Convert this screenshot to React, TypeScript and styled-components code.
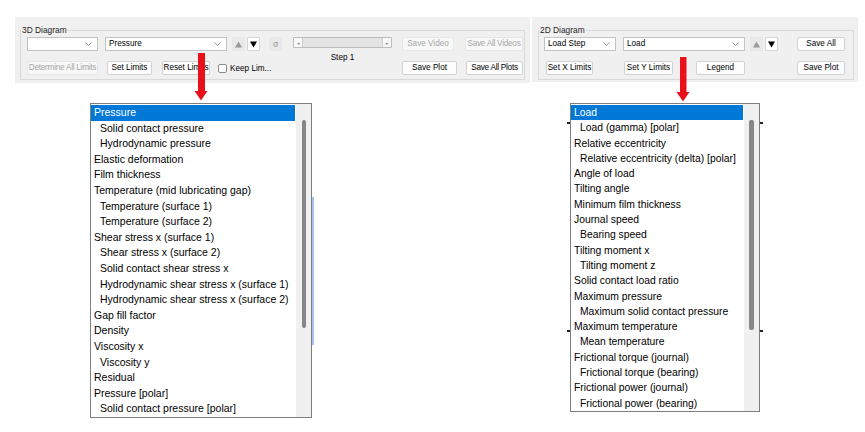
import styled, { createGlobalStyle } from "styled-components";

const GlobalStyle = createGlobalStyle`
  html, body { margin: 0; padding: 0; background: #fff; }
  body { font-family: "Liberation Sans", Arial, sans-serif; color: #000; }
  * { box-sizing: border-box; }
`;

type Entry = [string, number];

const items3D: Entry[] = [
  ["Pressure", 0],
  ["Solid contact pressure", 1],
  ["Hydrodynamic pressure", 1],
  ["Elastic deformation", 0],
  ["Film thickness", 0],
  ["Temperature (mid lubricating gap)", 0],
  ["Temperature (surface 1)", 1],
  ["Temperature (surface 2)", 1],
  ["Shear stress x (surface 1)", 0],
  ["Shear stress x (surface 2)", 1],
  ["Solid contact shear stress x", 1],
  ["Hydrodynamic shear stress x (surface 1)", 1],
  ["Hydrodynamic shear stress x (surface 2)", 1],
  ["Gap fill factor", 0],
  ["Density", 0],
  ["Viscosity x", 0],
  ["Viscosity y", 1],
  ["Residual", 0],
  ["Pressure [polar]", 0],
  ["Solid contact pressure [polar]", 1],
];

const items2D: Entry[] = [
  ["Load", 0],
  ["Load (gamma) [polar]", 1],
  ["Relative eccentricity", 0],
  ["Relative eccentricity (delta) [polar]", 1],
  ["Angle of load", 0],
  ["Tilting angle", 0],
  ["Minimum film thickness", 0],
  ["Journal speed", 0],
  ["Bearing speed", 1],
  ["Tilting moment x", 0],
  ["Tilting moment z", 1],
  ["Solid contact load ratio", 0],
  ["Maximum pressure", 0],
  ["Maximum solid contact pressure", 1],
  ["Maximum temperature", 0],
  ["Mean temperature", 1],
  ["Frictional torque (journal)", 0],
  ["Frictional torque (bearing)", 1],
  ["Frictional power (journal)", 0],
  ["Frictional power (bearing)", 1],
];

function Chevron() {
  return (
    <svg width="7" height="4" viewBox="0 0 7 4">
      <polyline points="0.5,0.5 3.5,3.5 6.5,0.5" fill="none" stroke="#8a8a8a" strokeWidth="0.9" />
    </svg>
  );
}

function Tri({ up, color }: { up?: boolean; color: string }) {
  return (
    <svg width="7" height="7" viewBox="0 0 7 7">
      <polygon points={up ? "0,6.5 3.5,0.5 7,6.5" : "0,0.5 3.5,6.5 7,0.5"} fill={color} />
    </svg>
  );
}

function Combo({ w, text }: { w: number; text?: string }) {
  return (
    <ComboBox $w={w}>
      <span>{text}</span>
      <Chevron />
    </ComboBox>
  );
}

function DropList({ items, w, rowH, font, thumbX, thumbW, thumbH }: {
  items: Entry[]; w: number; rowH: number; font: number; thumbX: number; thumbW: number; thumbH: number;
}) {
  return (
    <ListBox $w={w}>
      <ListItems>
        {items.map(([label, sub], i) => (
          <Item key={label} $sub={sub === 1} $selected={i === 0} $h={rowH} $font={font}>
            {label}
          </Item>
        ))}
      </ListItems>
      <ScrollTrack $x={thumbX}>
        <Thumb $w={thumbW} $h={thumbH} />
      </ScrollTrack>
    </ListBox>
  );
}

export default function App() {
  return (
    <Page>
      <GlobalStyle />
      <Toolbar>
        <Panel $w={515} $pad="8px 5px 3px 5px">
          <Group>
            <GroupTitle>3D Diagram</GroupTitle>
            <Controls $cols="71px 7px 177px 11px 99px 10px 55px 8px 58px" $inset={6}>
              <Cell $col={1}>
                <Combo w={71} />
              </Cell>
              <Cell $col={3}>
                <Combo w={123} text="Pressure" />
                <ArrowBtn $ml={5} $on={false}><Tri up color="#9a9a9a" /></ArrowBtn>
                <ArrowBtn $ml={2} $on><Tri color="#000" /></ArrowBtn>
                <ArrowBtn $ml={9} $on={false}><Sigma>σ</Sigma></ArrowBtn>
              </Cell>
              <SliderCell $col={5}>
                <SliderBox>
                  <SliderEnd>◂</SliderEnd>
                  <SliderTrack />
                  <SliderEnd>▸</SliderEnd>
                </SliderBox>
                <StepLabel>Step 1</StepLabel>
              </SliderCell>
              <Cell $col={7}>
                <Btn $w={52} disabled>Save Video</Btn>
              </Cell>
              <Cell $col={9}>
                <Btn $w={58} $tight disabled>Save All Videos</Btn>
              </Cell>
              <Cell $col={1} $row={2}>
                <Btn $w={71} $tight disabled>Determine All Limits</Btn>
              </Cell>
              <Cell $col={3} $row={2}>
                <Btn $w={45} $ml={2}>Set Limits</Btn>
                <Btn $w={48} $ml={10}>Reset Limits</Btn>
                <CheckBox />
                <CheckLabel>Keep Lim...</CheckLabel>
              </Cell>
              <Cell $col={7} $row={2}>
                <Btn $w={55}>Save Plot</Btn>
              </Cell>
              <Cell $col={9} $row={2}>
                <Btn $w={57} $ml={1} $tight>Save All Plots</Btn>
              </Cell>
            </Controls>
          </Group>
        </Panel>
        <Panel $w={326} $pad="8px 4px 2px 6px">
          <Group>
            <GroupTitle>2D Diagram</GroupTitle>
            <Controls $cols="72px 7px 122px 5px 29px 18px 48px" $inset={5}>
              <Cell $col={1}>
                <Combo w={72} text="Load Step" />
              </Cell>
              <Cell $col={3}>
                <Combo w={122} text="Load" />
              </Cell>
              <Cell $col={5}>
                <ArrowBtn $ml={0} $on={false}><Tri up color="#9a9a9a" /></ArrowBtn>
                <ArrowBtn $ml={2} $on><Tri color="#000" /></ArrowBtn>
              </Cell>
              <Cell $col={7}>
                <Btn $w={48}>Save All</Btn>
              </Cell>
              <Cell $col={1} $row={2}>
                <Btn $w={47} $ml={2}>Set X Limits</Btn>
              </Cell>
              <Cell $col={3} $row={2} $spread>
                <Btn $w={49} $ml={1}>Set Y Limits</Btn>
                <Btn $w={49}>Legend</Btn>
              </Cell>
              <Cell $col={7} $row={2}>
                <Btn $w={48}>Save Plot</Btn>
              </Cell>
            </Controls>
          </Group>
        </Panel>
      </Toolbar>

      <PopupRow>
        <DropList items={items3D} w={222} rowH={15.6} font={10.5} thumbX={6} thumbW={4} thumbH={208} />
        <DropList items={items2D} w={190} rowH={15.3} font={10.35} thumbX={5} thumbW={5} thumbH={210} />
      </PopupRow>

      <PlotMark $x={312} $y={197} $w={2} $h={148} $c="#a9bff0" />
      <PlotMark $x={567} $y={122} $w={3} $h={2} $c="#222" />
      <PlotMark $x={760} $y={122} $w={3} $h={2} $c="#222" />
      <PlotMark $x={567} $y={330} $w={3} $h={2} $c="#222" />
      <PlotMark $x={760} $y={330} $w={3} $h={2} $c="#222" />

      <RedArrow $x={194} $y={53} width="14" height="48" viewBox="0 0 14 48">
        <rect x="4" y="0" width="7" height="39" fill="#e8101a" />
        <polygon points="0.5,38 13.5,38 7,47.5" fill="#e8101a" />
      </RedArrow>
      <RedArrow $x={676} $y={57} width="14" height="45" viewBox="0 0 14 45">
        <rect x="4" y="0" width="6.5" height="36" fill="#e8101a" />
        <polygon points="0.5,35 13.5,35 7,44.5" fill="#e8101a" />
      </RedArrow>
    </Page>
  );
}

const Page = styled.div`
  position: relative;
  width: 865px;
  height: 432px;
  overflow: hidden;
  background: #fff;
`;

const Toolbar = styled.div`
  display: flex;
  align-items: flex-start;
  gap: 2px;
  padding: 17px 0 0 15px;
`;

const Panel = styled.div<{ $w: number; $pad: string }>`
  width: ${p => p.$w}px;
  padding: ${p => p.$pad};
  background: #f0f0f0;
`;

const Group = styled.fieldset`
  margin: 0;
  min-width: 0;
  padding: 2px 0 4px 0;
  border: 1px solid #d9d9d9;
`;

const GroupTitle = styled.legend`
  padding: 0 1px;
  font-size: 8.4px;
  line-height: 10px;
  color: #1e1e1e;
`;

const Controls = styled.div<{ $cols: string; $inset: number }>`
  display: grid;
  grid-template-columns: ${p => p.$cols};
  grid-template-rows: 14px 14px;
  row-gap: 10px;
  margin-left: ${p => p.$inset}px;
`;

const Cell = styled.div<{ $col: number; $row?: number; $spread?: boolean }>`
  grid-column: ${p => p.$col};
  grid-row: ${p => p.$row ?? 1};
  display: flex;
  align-items: center;
  justify-content: ${p => (p.$spread ? "space-between" : "flex-start")};
`;

const SliderCell = styled.div<{ $col: number }>`
  grid-column: ${p => p.$col};
  grid-row: 1 / span 2;
  display: flex;
  flex-direction: column;
`;

const Btn = styled.button<{ $w: number; $ml?: number; $tight?: boolean }>`
  width: ${p => p.$w}px;
  height: 14px;
  margin: 0 0 0 ${p => p.$ml ?? 0}px;
  padding: 0;
  font-family: "Liberation Sans", Arial, sans-serif;
  font-size: 8.2px;
  line-height: 12px;
  letter-spacing: ${p => (p.$tight ? "-0.25px" : "0")};
  white-space: nowrap;
  overflow: visible;
  color: #000;
  background: #fdfdfd;
  border: 1px solid #d2d2d2;
  border-radius: 2px;

  &:disabled {
    color: #a6a6a6;
    background: #f8f8f8;
    border-color: #e6e6e6;
  }
`;

const ComboBox = styled.div<{ $w: number }>`
  width: ${p => p.$w}px;
  height: 14px;
  display: flex;
  align-items: center;
  justify-content: space-between;
  padding: 0 5px 0 3px;
  background: #fff;
  border: 1px solid #c3c3c3;
  font-size: 8.2px;
  line-height: 12px;
`;

const ArrowBtn = styled.div<{ $on: boolean; $ml: number }>`
  width: 13px;
  height: 14px;
  margin-left: ${p => p.$ml}px;
  display: flex;
  align-items: center;
  justify-content: center;
  background: ${p => (p.$on ? "#fff" : "#e9e9e9")};
  border: 1px solid ${p => (p.$on ? "#d6d6d6" : "#e9e9e9")};
  border-radius: 1px;
`;

const Sigma = styled.span`
  font-size: 8.5px;
  line-height: 10px;
  color: #8c8c8c;
`;

const SliderBox = styled.div`
  width: 99px;
  height: 11px;
  display: flex;
  background: #f9f9f9;
  border: 1px solid #bcbcbc;
  border-radius: 1px;
`;

const SliderEnd = styled.div`
  width: 8px;
  display: flex;
  align-items: center;
  justify-content: center;
  font-size: 5px;
  color: #8c8c8c;
`;

const SliderTrack = styled.div`
  flex: 1;
  background: #e3e3e3;
  border-left: 1px solid #cdcdcd;
  border-right: 1px solid #cdcdcd;
`;

const StepLabel = styled.div`
  margin-top: 5px;
  text-align: center;
  font-size: 8.2px;
  line-height: 10px;
`;

const CheckBox = styled.span`
  width: 9px;
  height: 9px;
  margin-left: 8px;
  background: #fff;
  border: 1px solid #8a8a8a;
  border-radius: 2px;
`;

const CheckLabel = styled.span`
  margin-left: 3px;
  font-size: 8.2px;
  white-space: nowrap;
`;

const PopupRow = styled.div`
  display: flex;
  align-items: flex-start;
  gap: 258px;
  margin-top: 20px;
  padding-left: 90px;
`;

const ListBox = styled.div<{ $w: number }>`
  width: ${p => p.$w}px;
  display: flex;
  background: #fff;
  border: 1px solid #7e7e7e;
`;

const ListItems = styled.div`
  flex: 1;
  padding: 1px 1px 0 0;
`;

const Item = styled.div<{ $sub: boolean; $selected: boolean; $h: number; $font: number }>`
  height: ${p => p.$h}px;
  line-height: ${p => p.$h}px;
  padding-left: ${p => (p.$sub ? 9 : 3)}px;
  font-size: ${p => p.$font}px;
  white-space: nowrap;
  color: ${p => (p.$selected ? "#fff" : "#000")};
  background: ${p => (p.$selected ? "#0078d7" : "transparent")};
`;

const ScrollTrack = styled.div<{ $x: number }>`
  width: 15px;
  align-self: stretch;
  padding: 16px 0 0 ${p => p.$x}px;
  background: #f0f0f0;
`;

const Thumb = styled.div<{ $w: number; $h: number }>`
  width: ${p => p.$w}px;
  height: ${p => p.$h}px;
  background: #878787;
  border-radius: 2px;
`;

const PlotMark = styled.div<{ $x: number; $y: number; $w: number; $h: number; $c: string }>`
  position: absolute;
  left: ${p => p.$x}px;
  top: ${p => p.$y}px;
  width: ${p => p.$w}px;
  height: ${p => p.$h}px;
  background: ${p => p.$c};
`;

const RedArrow = styled.svg<{ $x: number; $y: number }>`
  position: absolute;
  left: ${p => p.$x}px;
  top: ${p => p.$y}px;
`;
